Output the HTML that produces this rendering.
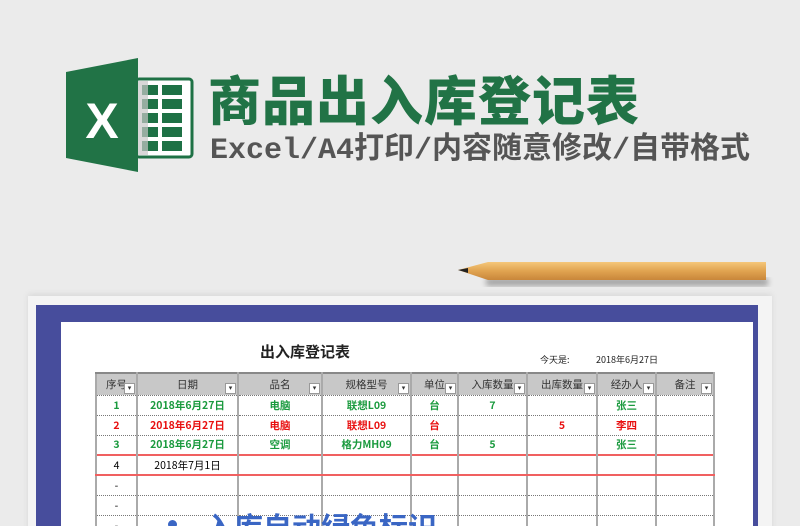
<!DOCTYPE html>
<html><head><meta charset="utf-8"><style>
*{margin:0;padding:0;box-sizing:border-box}
html,body{width:800px;height:526px;overflow:hidden}
body{background:#ebebeb;position:relative;font-family:"Liberation Sans","Noto Sans CJK SC",sans-serif}
.abs{position:absolute}
.t1{left:208px;top:66px;font-size:53px;font-weight:900;color:#217346;letter-spacing:1px;white-space:nowrap;font-family:"Noto Sans CJK SC",sans-serif;line-height:64px}
.t2{left:210px;top:132px;font-size:30px;font-weight:bold;color:#555;white-space:nowrap;font-family:"Liberation Mono","Noto Sans CJK SC",monospace;line-height:38px}
.card{left:28px;top:296px;width:744px;height:240px;background:#f4f4f4;box-shadow:0 -2px 6px rgba(0,0,0,.08)}
.purple{left:36px;top:305px;width:722px;height:230px;background:#474d9c}
.sheet{left:61px;top:322px;width:692px;height:210px;background:#fff}
table{position:absolute;left:95px;top:372px;border-collapse:collapse;font-size:10.5px;font-family:"Noto Sans CJK SC",sans-serif}
td{height:20px;text-align:center;border-left:2px solid #aaa;border-right:2px solid #aaa;border-bottom:1px dotted #777;position:relative;padding:0}
tr.h td{background:#c8c8c8;height:22px;color:#333;border-top:2px solid #888}
tr.h td:after{content:"▾";position:absolute;right:1px;bottom:1px;width:9px;height:9px;font-size:7px;line-height:9px;background:#fff;border:1px solid #999;color:#333}
.g td{color:#1a9a3e;font-weight:bold}
.r td{color:#e81010;font-weight:bold}
tr.red td{border-top:2px solid #f06060;border-bottom:2px solid #f06060}
</style></head><body>
<svg class="abs" style="left:60px;top:52px" width="140" height="125">
<rect x="76" y="27" width="56" height="78" rx="3" fill="#fff" stroke="#1e7145" stroke-width="3"/>
<g fill="#1e7145">
<rect x="82" y="33" width="16" height="10"/><rect x="102" y="33" width="20" height="10"/>
<rect x="82" y="47" width="16" height="10"/><rect x="102" y="47" width="20" height="10"/>
<rect x="82" y="61" width="16" height="10"/><rect x="102" y="61" width="20" height="10"/>
<rect x="82" y="75" width="16" height="10"/><rect x="102" y="75" width="20" height="10"/>
<rect x="82" y="89" width="16" height="10"/><rect x="102" y="89" width="20" height="10"/>
</g>
<rect x="78" y="29" width="10" height="74" fill="#c8c8c8" opacity=".7"/>
<polygon points="6,20 78,6 78,120 6,106" fill="#217346"/>
<text x="42" y="86" font-family="Liberation Sans" font-weight="bold" font-size="50" fill="#fff" text-anchor="middle">X</text>
</svg>
<div class="abs t1">商品出入库登记表</div>
<div class="abs t2">Excel/A4打印/内容随意修改/自带格式</div>
<div class="abs card"></div>
<svg class="abs" style="left:456px;top:256px" width="320" height="40">
<defs><linearGradient id="w" x1="0" y1="0" x2="0" y2="1"><stop offset="0" stop-color="#f5c77a"/><stop offset=".5" stop-color="#e0a350"/><stop offset="1" stop-color="#c8863a"/></linearGradient>
<filter id="b"><feGaussianBlur stdDeviation="3"/></filter></defs>
<rect x="30" y="22" width="282" height="8" fill="#000" opacity=".3" filter="url(#b)"/>
<polygon points="2,14 32,6 310,6 310,24 32,24" fill="url(#w)"/>
<polygon points="2,14 12,12 12,17" fill="#222"/>
</svg>
<div class="abs purple"></div>
<div class="abs sheet"></div>
<div class="abs" style="left:260px;top:341px;font-size:15px;font-weight:bold;color:#222;font-family:'Noto Sans CJK SC',sans-serif">出入库登记表</div>
<div class="abs" style="left:540px;top:353px;font-size:9px;color:#222;font-family:'Noto Sans CJK SC',sans-serif">今天是:</div>
<div class="abs" style="left:596px;top:353px;font-size:9px;color:#222;font-family:'Noto Sans CJK SC',sans-serif">2018年6月27日</div>
<table>
<colgroup><col style="width:41px"><col style="width:101px"><col style="width:84px"><col style="width:89px"><col style="width:47px"><col style="width:69px"><col style="width:70px"><col style="width:59px"><col style="width:58px"></colgroup>
<tr class="h"><td>序号</td><td>日期</td><td>品名</td><td>规格型号</td><td>单位</td><td>入库数量</td><td>出库数量</td><td>经办人</td><td>备注</td></tr>
<tr class="g"><td>1</td><td>2018年6月27日</td><td>电脑</td><td>联想L09</td><td>台</td><td>7</td><td></td><td>张三</td><td></td></tr>
<tr class="r"><td>2</td><td>2018年6月27日</td><td>电脑</td><td>联想L09</td><td>台</td><td></td><td>5</td><td>李四</td><td></td></tr>
<tr class="g"><td>3</td><td>2018年6月27日</td><td>空调</td><td>格力MH09</td><td>台</td><td>5</td><td></td><td>张三</td><td></td></tr>
<tr class="red"><td>4</td><td>2018年7月1日</td><td></td><td></td><td></td><td></td><td></td><td></td><td></td></tr>
<tr><td>-</td><td></td><td></td><td></td><td></td><td></td><td></td><td></td><td></td></tr>
<tr><td>-</td><td></td><td></td><td></td><td></td><td></td><td></td><td></td><td></td></tr>
<tr><td>-</td><td></td><td></td><td></td><td></td><td></td><td></td><td></td><td></td></tr>
</table>
<div class="abs" style="left:168px;top:520px;width:9px;height:9px;border-radius:50%;background:#3a66c4"></div>
<div class="abs" style="left:205px;top:508px;font-size:29px;font-weight:bold;color:#3a66c4;white-space:nowrap;font-family:'Noto Sans CJK SC',sans-serif;line-height:36px">入库自动绿色标识</div>
</body></html>
